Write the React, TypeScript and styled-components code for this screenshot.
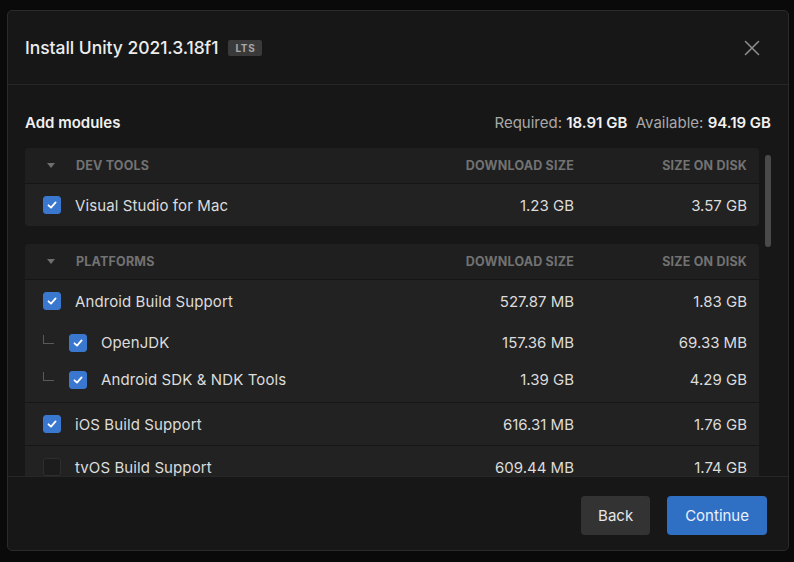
import styled, { createGlobalStyle } from 'styled-components';

const GlobalStyle = createGlobalStyle`
  html, body {
    margin: 0;
    padding: 0;
    background: #0a0a0a;
    font-family: Inter, 'Noto Sans', sans-serif;
    -webkit-font-smoothing: antialiased;
  }
`;

interface Module {
  name: string;
  download: string;
  disk: string;
  checked: boolean;
  children?: Module[];
}

const devTools: Module[] = [
  { name: 'Visual Studio for Mac', download: '1.23 GB', disk: '3.57 GB', checked: true },
];

const platforms: Module[] = [
  {
    name: 'Android Build Support',
    download: '527.87 MB',
    disk: '1.83 GB',
    checked: true,
    children: [
      { name: 'OpenJDK', download: '157.36 MB', disk: '69.33 MB', checked: true },
      { name: 'Android SDK & NDK Tools', download: '1.39 GB', disk: '4.29 GB', checked: true },
    ],
  },
  { name: 'iOS Build Support', download: '616.31 MB', disk: '1.76 GB', checked: true },
  { name: 'tvOS Build Support', download: '609.44 MB', disk: '1.74 GB', checked: false },
];

function CheckIcon() {
  return (
    <svg width="12" height="12" viewBox="0 0 12 12" fill="none">
      <path d="M2.5 6.3 L5 8.6 L9.6 3.4" stroke="#fff" strokeWidth="1.8" strokeLinecap="round" strokeLinejoin="round" />
    </svg>
  );
}

function ModuleRow({ mod, sub }: { mod: Module; sub?: boolean }) {
  return (
    <Row $sub={sub}>
      <NameCell>
        {sub && <TreeLine />}
        <Checkbox $checked={mod.checked}>{mod.checked && <CheckIcon />}</Checkbox>
        <Name>{mod.name}</Name>
      </NameCell>
      <Size>{mod.download}</Size>
      <Size>{mod.disk}</Size>
    </Row>
  );
}

function Section({ title, modules }: { title: string; modules: Module[] }) {
  return (
    <SectionBox>
      <SectionHeader>
        <NameCell>
          <Caret />
          <HeaderLabel>{title}</HeaderLabel>
        </NameCell>
        <HeaderLabel $right>Download size</HeaderLabel>
        <HeaderLabel $right>Size on disk</HeaderLabel>
      </SectionHeader>
      {modules.map((m) => (
        <Group key={m.name}>
          <ModuleRow mod={m} />
          {m.children && (
            <SubGroup>
              {m.children.map((c) => (
                <ModuleRow key={c.name} mod={c} sub />
              ))}
            </SubGroup>
          )}
        </Group>
      ))}
    </SectionBox>
  );
}

export default function App() {
  return (
    <>
      <GlobalStyle />
      <Screen>
        <Dialog>
          <Header>
            <Title>Install Unity 2021.3.18f1</Title>
            <Badge>LTS</Badge>
            <Close aria-label="Close">
              <svg width="16" height="16" viewBox="0 0 16 16">
                <path d="M1.5 1.5 L14.5 14.5 M14.5 1.5 L1.5 14.5" stroke="#8c8c8c" strokeWidth="1.6" strokeLinecap="round" />
              </svg>
            </Close>
          </Header>
          <Body>
            <Summary>
              <SummaryTitle>Add modules</SummaryTitle>
              <Space>
                Required: <b>18.91 GB</b>&nbsp;&nbsp;Available: <b>94.19 GB</b>
              </Space>
            </Summary>
            <ListArea>
              <List>
                <Section title="Dev tools" modules={devTools} />
                <Section title="Platforms" modules={platforms} />
              </List>
              <Scrollbar />
            </ListArea>
          </Body>
          <Footer>
            <Button>Back</Button>
            <Button $primary>Continue</Button>
          </Footer>
        </Dialog>
      </Screen>
    </>
  );
}

const Screen = styled.div`
  width: 794px;
  height: 562px;
  padding: 10px 5px 11px 7px;
  box-sizing: border-box;
`;

const Dialog = styled.div`
  width: 100%;
  height: 100%;
  box-sizing: border-box;
  background: #171717;
  border: 1px solid #2b2b2b;
  border-radius: 5px;
  display: flex;
  flex-direction: column;
  overflow: hidden;
`;

const Header = styled.div`
  height: 73px;
  flex: none;
  display: flex;
  align-items: center;
  padding: 0 28px 0 17px;
  border-bottom: 1px solid #272727;
`;

const Title = styled.h1`
  margin: 0;
  font-size: 17.5px;
  font-weight: 500;
  color: #ececec;
  letter-spacing: -0.05px;
`;

const Badge = styled.span`
  margin-left: 10px;
  padding: 3px 7px;
  background: #3a3a3a;
  border-radius: 2px;
  font-size: 10px;
  font-weight: 700;
  color: #a8a8a8;
  letter-spacing: 0.7px;
  line-height: 10px;
`;

const Close = styled.button`
  margin-left: auto;
  background: none;
  border: 0;
  padding: 0;
  display: flex;
`;

const Body = styled.div`
  flex: 1;
  min-height: 0;
  display: flex;
  flex-direction: column;
  padding: 0 17px 0 17px;
`;

const Summary = styled.div`
  height: 63px;
  flex: none;
  display: flex;
  align-items: center;
  justify-content: space-between;
  padding-top: 12px;
  box-sizing: border-box;
`;

const SummaryTitle = styled.span`
  font-size: 15px;
  font-weight: 600;
  color: #f0f0f0;
`;

const Space = styled.span`
  font-size: 15px;
  color: #a9a9a9;
  b {
    color: #f2f2f2;
    font-weight: 600;
  }
`;

const ListArea = styled.div`
  flex: 1;
  min-height: 0;
  display: flex;
  gap: 6px;
  overflow: hidden;
`;

const List = styled.div`
  flex: 1;
  display: flex;
  flex-direction: column;
  gap: 18px;
`;

const Scrollbar = styled.div`
  width: 6px;
  height: 92px;
  margin-top: 7px;
  border-radius: 3px;
  background: #4a4a4a;
`;

const SectionBox = styled.div`
  background: #222222;
  border-radius: 4px;
  flex: none;
`;

const grid = `
  display: grid;
  grid-template-columns: 1fr 140px 173px;
  align-items: center;
  padding: 0 12px 0 18px;
`;

const SectionHeader = styled.div`
  ${grid}
  height: 35px;
  background: #1f1f1f;
  border-radius: 4px 4px 0 0;
  padding-left: 22px;
`;

const Group = styled.div`
  border-top: 1px solid #161616;
`;

const SubGroup = styled.div`
  padding: 2px 0 4px;
`;

const Caret = styled.span`
  width: 0;
  height: 0;
  border-left: 4.5px solid transparent;
  border-right: 4.5px solid transparent;
  border-top: 5px solid #6f6f6f;
  margin-right: 21px;
`;

const HeaderLabel = styled.span<{ $right?: boolean }>`
  font-size: 12.5px;
  font-weight: 700;
  text-transform: uppercase;
  color: #727272;
  text-align: ${(p) => (p.$right ? 'right' : 'left')};
  letter-spacing: 0.2px;
`;

const Row = styled.div<{ $sub?: boolean }>`
  ${grid}
  height: ${(p) => (p.$sub ? '37px' : '42px')};
`;

const NameCell = styled.div`
  display: flex;
  align-items: center;
`;

const TreeLine = styled.span`
  width: 10px;
  height: 8px;
  margin: -6px 15px 0 0;
  border-left: 1px solid #5a5a5a;
  border-bottom: 1px solid #5a5a5a;
`;

const Checkbox = styled.span<{ $checked: boolean }>`
  width: 18px;
  height: 18px;
  box-sizing: border-box;
  border-radius: 3px;
  display: flex;
  align-items: center;
  justify-content: center;
  margin-right: 14px;
  background: ${(p) => (p.$checked ? '#3a78cf' : '#1c1c1c')};
  border: 1px solid ${(p) => (p.$checked ? '#3a78cf' : '#2e2e2e')};
`;

const Name = styled.span`
  font-size: 15px;
  color: #dcdcdc;
  letter-spacing: 0.1px;
`;

const Size = styled.span`
  font-size: 15px;
  color: #dcdcdc;
  text-align: right;
`;

const Footer = styled.div`
  height: 74px;
  flex: none;
  display: flex;
  align-items: center;
  justify-content: flex-end;
  gap: 17px;
  padding: 3px 21px 0 0;
  border-top: 1px solid #272727;
  box-sizing: border-box;
`;

const Button = styled.button<{ $primary?: boolean }>`
  height: 39px;
  padding: 0 ${(p) => (p.$primary ? '18px' : '17px')};
  border: 0;
  border-radius: 4px;
  font-family: Inter, 'Noto Sans', sans-serif;
  font-size: 15px;
  color: ${(p) => (p.$primary ? '#eaf1fb' : '#e6e6e6')};
  background: ${(p) => (p.$primary ? '#2f6fc4' : '#333333')};
`;
